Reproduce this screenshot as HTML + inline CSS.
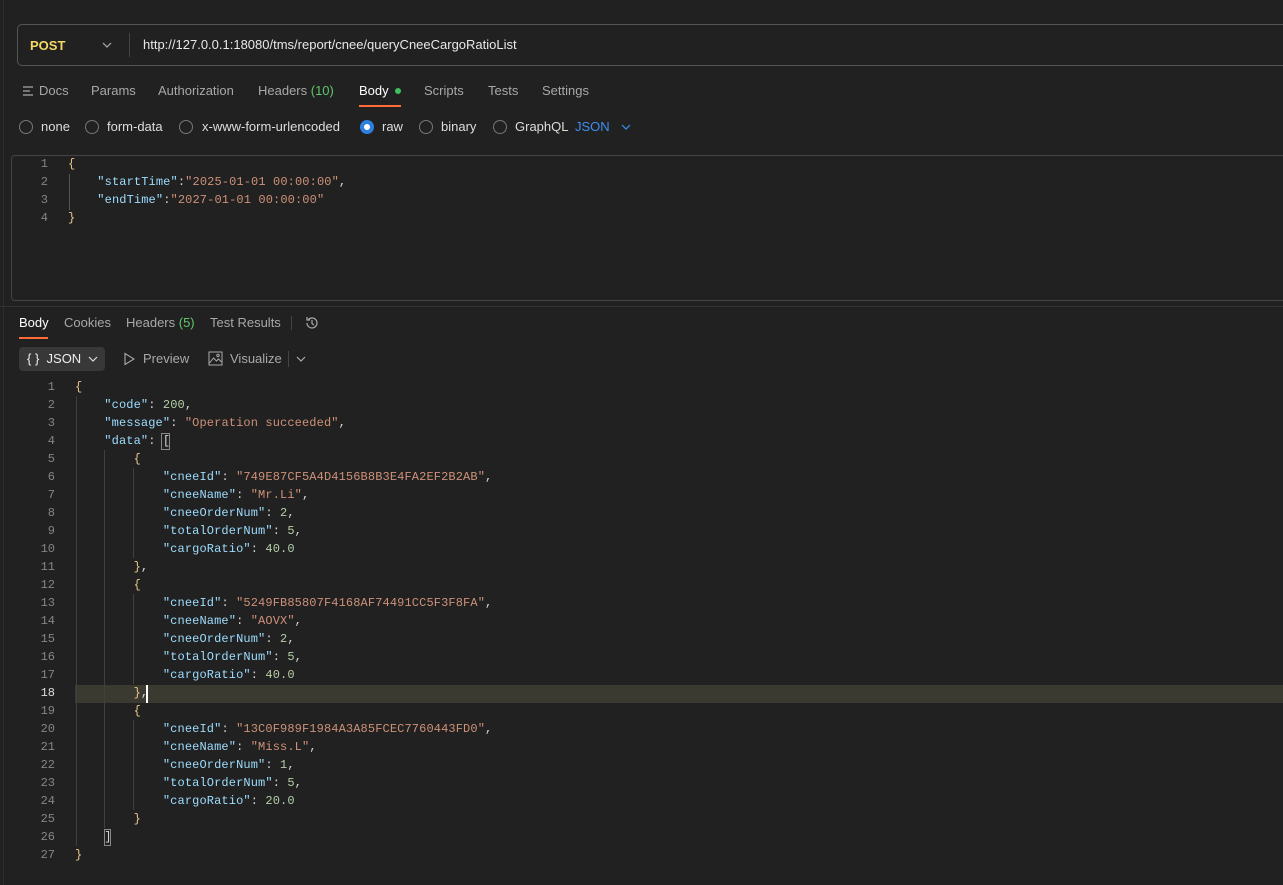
<!DOCTYPE html>
<html><head><meta charset="utf-8"><style>
*{margin:0;padding:0;box-sizing:border-box}
body{width:1283px;height:885px;background:#212121;font-family:"Liberation Sans",sans-serif;color:#cfcfcf;position:relative;overflow:hidden;font-size:13px}
.a{position:absolute;white-space:pre}
.mono{font-family:"Liberation Mono",monospace;font-size:12px;line-height:18px;white-space:normal;letter-spacing:0.12px}
.mono>div{white-space:pre;height:18px}
.k{color:#9cdcfe}.s{color:#ce9178}.n{color:#b5cea8}.p{color:#d4d4d4}.b{color:#e8c88a}
.ln{color:#858585;text-align:right;width:31px;display:inline-block;margin-right:20px;letter-spacing:0}
.tab{color:#a8a8a8}
.g{position:absolute;width:1px;background:#404040}
.radio{position:absolute;width:14px;height:14px;border:1px solid #777;border-radius:50%}
</style></head><body>
<div class="a" style="left:3px;top:0;width:1px;height:885px;background:#2c2c2c"></div>
<div class="a" style="left:17px;top:24px;width:1280px;height:42px;border:1px solid #555;border-radius:5px"></div>
<div class="a" style="left:30px;top:38px;font-weight:bold;color:#f5d866;font-size:13px">POST</div>
<svg class="a" style="left:101px;top:40px" width="12" height="10"><path d="M2 3l4 4 4-4" stroke="#aaa" fill="none" stroke-width="1.2"/></svg>
<div class="a" style="left:129px;top:33px;width:1px;height:24px;background:#444"></div>
<div class="a" style="left:143px;top:37px;color:#e8e8e8;font-size:13px">http://127.0.0.1:18080/tms/report/cnee/queryCneeCargoRatioList</div>
<svg class="a" style="left:22px;top:85px" width="12" height="12"><path d="M1 2h10M1 6h7M1 10h10" stroke="#aaa" stroke-width="1.2"/></svg>
<div class="a tab" style="left:39px;top:83px">Docs</div>
<div class="a tab" style="left:91px;top:83px">Params</div>
<div class="a tab" style="left:158px;top:83px">Authorization</div>
<div class="a tab" style="left:258px;top:83px">Headers <span style="color:#5fc76a">(10)</span></div>
<div class="a" style="left:359px;top:83px;color:#fff;font-weight:500">Body</div>
<div class="a" style="left:395px;top:88px;width:6px;height:6px;border-radius:50%;background:#3fbf5f"></div>
<div class="a" style="left:359px;top:105px;width:42px;height:2px;background:#ff6c37"></div>
<div class="a tab" style="left:424px;top:83px">Scripts</div>
<div class="a tab" style="left:488px;top:83px">Tests</div>
<div class="a tab" style="left:542px;top:83px">Settings</div>
<div class="radio" style="left:19px;top:120px"></div><div class="a" style="left:41px;top:119px;color:#ddd">none</div>
<div class="radio" style="left:85px;top:120px"></div><div class="a" style="left:107px;top:119px;color:#ddd">form-data</div>
<div class="radio" style="left:179px;top:120px"></div><div class="a" style="left:202px;top:119px;color:#ddd">x-www-form-urlencoded</div>
<div class="a" style="left:360px;top:120px;width:14px;height:14px;border-radius:50%;background:#2d7fe0"><div style="margin:4px;width:6px;height:6px;border-radius:50%;background:#fff"></div></div>
<div class="a" style="left:382px;top:119px;color:#ddd">raw</div>
<div class="radio" style="left:419px;top:120px"></div><div class="a" style="left:441px;top:119px;color:#ddd">binary</div>
<div class="radio" style="left:493px;top:120px"></div><div class="a" style="left:515px;top:119px;color:#ddd">GraphQL</div>
<div class="a" style="left:575px;top:119px;color:#3d8ef0;font-weight:500">JSON</div>
<svg class="a" style="left:620px;top:122px" width="12" height="10"><path d="M2 3l4 4 4-4" stroke="#3d8ef0" fill="none" stroke-width="1.2"/></svg>
<div class="a" style="left:11px;top:155px;width:1290px;height:146px;border:1px solid #444;border-radius:4px"></div>
<div class="a" style="left:0;top:306px;width:1283px;height:1px;background:#333"></div>
<div class="g" style="left:69px;top:174px;height:36px;background:#555"></div>
<div class="a mono" style="left:17px;top:155px"><div><span class="ln">1</span><span class="b">{</span></div><div><span class="ln">2</span>    <span class="k">"startTime"</span><span class="p">:</span><span class="s">"2025-01-01 00:00:00"</span><span class="p">,</span></div><div><span class="ln">3</span>    <span class="k">"endTime"</span><span class="p">:</span><span class="s">"2027-01-01 00:00:00"</span></div><div><span class="ln">4</span><span class="b">}</span></div></div>
<div class="a" style="left:19px;top:315px;color:#fff">Body</div>
<div class="a" style="left:19px;top:337px;width:29px;height:2px;background:#ff6c37"></div>
<div class="a tab" style="left:64px;top:315px">Cookies</div>
<div class="a tab" style="left:126px;top:315px">Headers <span style="color:#5fc76a">(5)</span></div>
<div class="a tab" style="left:210px;top:315px">Test Results</div>
<div class="a" style="left:291px;top:316px;width:1px;height:14px;background:#444"></div>
<svg class="a" style="left:304px;top:315px" width="16" height="16"><path d="M3 8a5 5 0 1 0 1.5-3.6M3 2v3h3M8 5v3.5l2 1.5" stroke="#aaa" fill="none" stroke-width="1.2"/></svg>
<div class="a" style="left:19px;top:347px;width:86px;height:24px;background:#383838;border-radius:4px"></div>
<div class="a" style="left:27px;top:351px;color:#eee;font-size:13px">{ }  JSON</div>
<svg class="a" style="left:87px;top:354px" width="12" height="10"><path d="M2 3l4 4 4-4" stroke="#ddd" fill="none" stroke-width="1.2"/></svg>
<svg class="a" style="left:123px;top:352px" width="12" height="14"><path d="M2 1.5l9 5.5-9 5.5z" stroke="#aaa" fill="none" stroke-width="1.1"/></svg>
<div class="a tab" style="left:143px;top:351px">Preview</div>
<svg class="a" style="left:208px;top:351px" width="15" height="15"><rect x="1" y="1" width="13" height="13" stroke="#aaa" fill="none"/><path d="M1.5 12l4-5 3 3 2-2 3 3" stroke="#aaa" fill="none"/><circle cx="10" cy="4.5" r="1.2" stroke="#aaa" fill="none"/></svg>
<div class="a tab" style="left:230px;top:351px">Visualize</div>
<div class="a" style="left:288px;top:351px;width:1px;height:16px;background:#444"></div>
<svg class="a" style="left:295px;top:354px" width="12" height="10"><path d="M2 3l4 4 4-4" stroke="#aaa" fill="none" stroke-width="1.2"/></svg>
<div class="a" style="left:75px;top:685px;width:1210px;height:18px;background:#3b3a30"></div>
<div class="a" style="left:146px;top:685px;width:2px;height:18px;background:#fff"></div>
<div class="g" style="left:76px;top:396px;height:450px"></div>
<div class="g" style="left:104px;top:450px;height:378px"></div>
<div class="g" style="left:133px;top:468px;height:90px"></div>
<div class="g" style="left:133px;top:594px;height:90px"></div>
<div class="g" style="left:133px;top:720px;height:90px"></div>
<div class="a" style="left:161px;top:433px;width:9px;height:17px;border:1px solid #888"></div>
<div class="a" style="left:104px;top:829px;width:7px;height:17px;border:1px solid #888"></div>
<div class="a mono" style="left:24px;top:378px"><div><span class="ln">1</span><span class="b">{</span></div><div><span class="ln">2</span>    <span class="k">"code"</span><span class="p">: </span><span class="n">200</span><span class="p">,</span></div><div><span class="ln">3</span>    <span class="k">"message"</span><span class="p">: </span><span class="s">"Operation succeeded"</span><span class="p">,</span></div><div><span class="ln">4</span>    <span class="k">"data"</span><span class="p">: [</span></div><div><span class="ln">5</span>        <span class="b">{</span></div><div><span class="ln">6</span>            <span class="k">"cneeId"</span><span class="p">: </span><span class="s">"749E87CF5A4D4156B8B3E4FA2EF2B2AB"</span><span class="p">,</span></div><div><span class="ln">7</span>            <span class="k">"cneeName"</span><span class="p">: </span><span class="s">"Mr.Li"</span><span class="p">,</span></div><div><span class="ln">8</span>            <span class="k">"cneeOrderNum"</span><span class="p">: </span><span class="n">2</span><span class="p">,</span></div><div><span class="ln">9</span>            <span class="k">"totalOrderNum"</span><span class="p">: </span><span class="n">5</span><span class="p">,</span></div><div><span class="ln">10</span>            <span class="k">"cargoRatio"</span><span class="p">: </span><span class="n">40.0</span></div><div><span class="ln">11</span>        <span class="b">}</span><span class="p">,</span></div><div><span class="ln">12</span>        <span class="b">{</span></div><div><span class="ln">13</span>            <span class="k">"cneeId"</span><span class="p">: </span><span class="s">"5249FB85807F4168AF74491CC5F3F8FA"</span><span class="p">,</span></div><div><span class="ln">14</span>            <span class="k">"cneeName"</span><span class="p">: </span><span class="s">"AOVX"</span><span class="p">,</span></div><div><span class="ln">15</span>            <span class="k">"cneeOrderNum"</span><span class="p">: </span><span class="n">2</span><span class="p">,</span></div><div><span class="ln">16</span>            <span class="k">"totalOrderNum"</span><span class="p">: </span><span class="n">5</span><span class="p">,</span></div><div><span class="ln">17</span>            <span class="k">"cargoRatio"</span><span class="p">: </span><span class="n">40.0</span></div><div><span class="ln" style="color:#ddd">18</span>        <span class="b">}</span><span class="p">,</span></div><div><span class="ln">19</span>        <span class="b">{</span></div><div><span class="ln">20</span>            <span class="k">"cneeId"</span><span class="p">: </span><span class="s">"13C0F989F1984A3A85FCEC7760443FD0"</span><span class="p">,</span></div><div><span class="ln">21</span>            <span class="k">"cneeName"</span><span class="p">: </span><span class="s">"Miss.L"</span><span class="p">,</span></div><div><span class="ln">22</span>            <span class="k">"cneeOrderNum"</span><span class="p">: </span><span class="n">1</span><span class="p">,</span></div><div><span class="ln">23</span>            <span class="k">"totalOrderNum"</span><span class="p">: </span><span class="n">5</span><span class="p">,</span></div><div><span class="ln">24</span>            <span class="k">"cargoRatio"</span><span class="p">: </span><span class="n">20.0</span></div><div><span class="ln">25</span>        <span class="b">}</span></div><div><span class="ln">26</span>    <span class="p">]</span></div><div><span class="ln">27</span><span class="b">}</span></div></div>
</body></html>
